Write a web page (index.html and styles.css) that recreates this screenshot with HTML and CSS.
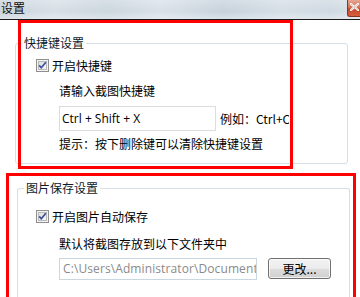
FILE: index.html
```html
<!DOCTYPE html>
<html lang="zh-CN">
<head>
<meta charset="utf-8">
<title>设置</title>
<link rel="stylesheet" href="styles.css">
</head>
<body>
<div class="window">
  <div class="titlebar">
    <span class="title">设置</span>
    <span class="close">
      <svg width="9" height="8" viewBox="0 0 9 8"><path d="M1 1 L8 7 M8 1 L1 7" stroke="#fff" stroke-width="2.2" stroke-linecap="square"/><path d="M1 1 L8 7 M8 1 L1 7" stroke="#5a5a5a" stroke-width="0.6" fill="none" opacity="0.5"/></svg>
    </span>
  </div>
  <div class="content">
    <div class="group g1">
      <span class="legend">快捷键设置</span>
      <div class="check">
        <svg class="box" width="13" height="13" viewBox="0 0 13 13">
          <defs><linearGradient id="cb1" x1="0" y1="0" x2="1" y2="1"><stop offset="0" stop-color="#dcdcdc"/><stop offset="1" stop-color="#fbfbfb"/></linearGradient></defs>
          <rect x="0.5" y="0.5" width="12" height="12" fill="#f4f4f4" stroke="#8f8f8f"/>
          <rect x="2.5" y="2.5" width="8" height="8" fill="url(#cb1)" stroke="#b8b8b8"/>
          <path d="M3.2 6.4 L5.3 8.8 L9.8 3.2" fill="none" stroke="#3b4f9c" stroke-width="1.7"/>
        </svg>
        <span>开启快捷键</span>
      </div>
      <div class="indent">
        <div class="text t1">请输入截图快捷键</div>
        <div class="row r1">
          <div class="input i1">Ctrl + Shift + X</div>
          <span class="example">例如：Ctrl+C</span>
        </div>
        <div class="text hint">提示：按下删除键可以清除快捷键设置</div>
      </div>
    </div>
    <div class="group g2">
      <span class="legend">图片保存设置</span>
      <div class="check">
        <svg class="box" width="13" height="13" viewBox="0 0 13 13">
          <defs><linearGradient id="cb2" x1="0" y1="0" x2="1" y2="1"><stop offset="0" stop-color="#dcdcdc"/><stop offset="1" stop-color="#fbfbfb"/></linearGradient></defs>
          <rect x="0.5" y="0.5" width="12" height="12" fill="#f4f4f4" stroke="#8f8f8f"/>
          <rect x="2.5" y="2.5" width="8" height="8" fill="url(#cb2)" stroke="#b8b8b8"/>
          <path d="M3.2 6.4 L5.3 8.8 L9.8 3.2" fill="none" stroke="#3b4f9c" stroke-width="1.7"/>
        </svg>
        <span>开启图片自动保存</span>
      </div>
      <div class="indent">
        <div class="text t2">默认将截图存放到以下文件夹中</div>
        <div class="row r2">
          <div class="input i2">C:\Users\Administrator\Documents</div>
          <button class="btn" type="button">更改...</button>
        </div>
      </div>
    </div>
  </div>
</div>
<div class="mark m1"></div>
<div class="mark m2"></div>
</body>
</html>
```
FILE: styles.css
```css
html, body {
  margin: 0;
  padding: 0;
  background: #fff;
  overflow: hidden;
}
body {
  width: 360px;
  height: 297px;
  position: relative;
  font-family: "Noto Sans CJK SC", "Open Sans", sans-serif;
  font-size: 12px;
  color: #000;
}
.window {
  display: flex;
  flex-direction: column;
  height: 297px;
  overflow: hidden;
}
.titlebar {
  height: 19px;
  flex: none;
  display: flex;
  justify-content: space-between;
  align-items: flex-start;
  background:
    linear-gradient(to bottom, rgba(255,255,255,0.25), rgba(255,255,255,0) 60%, rgba(255,255,255,0.35)),
    linear-gradient(to right, #c9d4dc 0%, #d7dfe6 15%, #cbd6de 30%, #d9e1e8 45%, #c6d2dc 62%, #d5dee6 78%, #cfd9e2 92%, #d8e0e7 100%);
  border-bottom: 1px solid #1a1a1a;
}
.title {
  font-size: 12px;
  line-height: 16px;
  padding-left: 1px;
  color: #111;
}
.close {
  width: 13px;
  height: 17px;
  box-sizing: border-box;
  border: 1px solid #8a3523;
  border-top: 0;
  border-right: 0;
  border-radius: 0 0 0 3px;
  background: linear-gradient(to bottom, #e6a58f 0%, #d9765a 45%, #c7472c 55%, #d4603f 100%);
  display: flex;
  align-items: center;
  justify-content: center;
  padding-bottom: 2px;
}
.content {
  display: flex;
  flex-direction: column;
}
.group {
  position: relative;
  box-sizing: border-box;
  width: 333px;
  border: 1px solid #d5dfe6;
  border-radius: 3px;
  display: flex;
  flex-direction: column;
  flex: none;
}
.g1 {
  margin: 23px 0 0 15px;
  height: 121px;
  padding: 14px 0 0 20px;
}
.g2 {
  margin: 24px 0 0 17px;
  height: 111px;
  padding: 20px 0 0 18px;
  border-bottom: 0;
}
.legend {
  position: absolute;
  top: -9px;
  left: 6px;
  padding: 0 2px;
  background: #fff;
  line-height: 16px;
  color: #0e1a2a;
}
.check {
  display: flex;
  align-items: center;
  height: 15px;
  gap: 3px;
}
.check span {
  line-height: 15px;
}
.box {
  display: block;
  flex: none;
}
.indent {
  display: flex;
  flex-direction: column;
  padding-left: 23px;
}
.text {
  line-height: 16px;
  white-space: nowrap;
}
.t1 { margin-top: 10px; }
.hint { margin-top: 5px; }
.t2 { margin-top: 12px; }
.row {
  display: flex;
  align-items: center;
  white-space: nowrap;
}
.r1 {
  margin-top: 7px;
  width: 230px;
  overflow: hidden;
}
.r2 {
  margin-top: 6px;
  align-items: flex-start;
  gap: 11px;
}
.input {
  box-sizing: border-box;
  border: 1px solid #dcdcdc;
  background: #fff;
  font-family: "Open Sans", "Noto Sans CJK SC", sans-serif;
  overflow: hidden;
  white-space: nowrap;
  flex: none;
}
.i1 {
  width: 157px;
  height: 25px;
  line-height: 23px;
  padding-left: 2px;
  font-size: 12px;
  color: #000;
}
.example {
  margin-left: 4px;
}
.i2 {
  width: 198px;
  height: 22px;
  line-height: 20px;
  padding-left: 3px;
  font-size: 12px;
  letter-spacing: 0.1px;
  color: #8a8a8a;
  border-color: #c9d7e3;
}
.btn {
  box-sizing: border-box;
  width: 63px;
  height: 21px;
  border: 1px solid #707070;
  border-radius: 3px;
  background: linear-gradient(to bottom, #f3f3f3 0%, #ebebeb 50%, #dddddd 51%, #cfcfcf 100%);
  box-shadow: inset 0 0 0 1px rgba(255,255,255,0.7);
  font-family: "Noto Sans CJK SC", sans-serif;
  font-size: 12px;
  line-height: 17px;
  padding: 0;
  color: #000;
}
.mark {
  position: absolute;
  border: 3px solid #ff0000;
  box-sizing: border-box;
  pointer-events: none;
}
.m1 {
  left: 18px;
  top: 20px;
  width: 275px;
  height: 149px;
}
.m2 {
  left: 6px;
  top: 173px;
  width: 350px;
  height: 124px;
  border-bottom: 0;
}
```
